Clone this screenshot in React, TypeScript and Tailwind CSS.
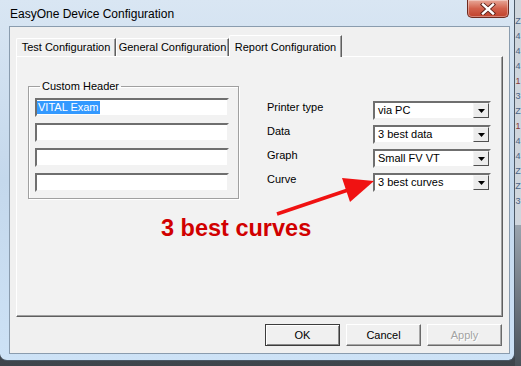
import React from "react";

const fields = ["VITAL Exam", "", "", ""];

const options = [
  { label: "Printer type", value: "via PC" },
  { label: "Data", value: "3 best data" },
  { label: "Graph", value: "Small FV VT" },
  { label: "Curve", value: "3 best curves" },
];

function CloseButton() {
  return (
    <div className="mr-[1px] flex h-[18px] w-[42px] items-center justify-center rounded-b-[5px] border border-t-0 border-[#6e2a1f] bg-gradient-to-b from-[#e7a899] via-[#d2614c] to-[#c0412b] shadow-[inset_0_0_0_1px_rgba(255,255,255,0.35)]">
      <svg width="16" height="12" viewBox="0 0 16 12">
        <path d="M3 1.5 L13 10.5 M13 1.5 L3 10.5" stroke="#5a2018" strokeWidth="4.2" strokeLinecap="square" />
        <path d="M3 1.5 L13 10.5 M13 1.5 L3 10.5" stroke="#ffffff" strokeWidth="2.4" strokeLinecap="square" />
      </svg>
    </div>
  );
}

function Combo({ value }: { value: string }) {
  return (
    <div className="flex h-[19px] w-[118px] items-stretch border-2 border-t-[#6f6f6f] border-l-[#6f6f6f] border-r-[#f2f2f2] border-b-[#f2f2f2] bg-white">
      <span className="flex-1 pl-[3px] text-[11px] leading-[14px] text-black">{value}</span>
      <div className="flex w-[16px] items-center justify-center border border-t-[#f4f4f4] border-l-[#f4f4f4] border-r-[#505050] border-b-[#505050] bg-[#ececec]">
        <svg width="7" height="4" viewBox="0 0 7 4" className="mt-[1px]">
          <path d="M0 0 H7 L3.5 4 Z" fill="#000" />
        </svg>
      </div>
    </div>
  );
}

function Button({ label, primary, disabled }: { label: string; primary?: boolean; disabled?: boolean }) {
  return (
    <div
      className={
        "flex h-[22px] w-[75px] items-center justify-center bg-[#f0f0f0] text-[11px] " +
        (primary
          ? "border border-[#3c3c3c] shadow-[inset_1px_1px_0_#fff,inset_-1px_-1px_0_#8a8a8a]"
          : "border border-t-[#ffffff] border-l-[#ffffff] border-r-[#6a6a6a] border-b-[#6a6a6a] shadow-[inset_-1px_-1px_0_#a8a8a8]")
      }
    >
      <span className={disabled ? "text-[#a3a3a3] [text-shadow:1px_1px_0_#fff]" : "text-black"}>{label}</span>
    </div>
  );
}

export default function App() {
  return (
    <div className="flex h-[366px] w-[521px] overflow-hidden bg-gradient-to-b from-[#6f7a86] to-[#3e444b] font-['Liberation_Sans',Arial,sans-serif]">
      {/* dialog window */}
      <div className="flex h-[361px] w-[515px] shrink-0 flex-col rounded-b-[7px] border-r border-b border-[#4b5866] bg-gradient-to-b from-[#d9e6f3] via-[#c4d8ec] to-[#cde2f6] pr-[4px] pb-[6px] pl-[9px]">
        {/* title bar */}
        <div className="flex h-[26px] shrink-0 items-start justify-between">
          <span className="pt-[7px] pl-[1px] text-[12px] leading-[14px] text-black">EasyOne Device Configuration</span>
          <CloseButton />
        </div>

        {/* client area */}
        <div className="flex flex-1 flex-col border border-[#8a9cae] bg-[#f0f0f0] px-[6px] pt-[8px]">
          {/* tabs */}
          <div className="flex h-[21px] items-end text-[11px] text-black">
            <div className="flex h-[18px] w-[100px] items-center justify-center rounded-tl-[2px] border-t border-l border-white border-r border-r-[#5f5f5f] shadow-[inset_-1px_0_0_#a0a0a0]">
              Test Configuration
            </div>
            <div className="flex h-[18px] w-[113px] items-center justify-center rounded-tl-[2px] border-t border-l border-white border-r border-r-[#5f5f5f] shadow-[inset_-1px_0_0_#a0a0a0]">
              General Configuration
            </div>
            <div className="relative z-10 -mb-[1px] flex h-[22px] w-[113px] items-start justify-center rounded-tl-[2px] border-t border-l border-white border-r border-r-[#5f5f5f] bg-[#f2f2f2] pt-[3px] shadow-[inset_-1px_0_0_#a0a0a0]">
              Report Configuration
            </div>
          </div>

          {/* tab page */}
          <div className="relative flex h-[261px] items-start border border-t-white border-l-white border-r-[#5f5f5f] border-b-[#5f5f5f] bg-[#f2f2f2] shadow-[inset_-1px_-1px_0_#a0a0a0]">
            <fieldset className="mt-[23px] ml-[11px] w-[211px] border border-[#a0a0a0] pt-0 pr-[9px] pb-[6px] pl-[6px] shadow-[inset_1px_1px_0_#fff,1px_1px_0_#fff]">
              <legend className="ml-[5px] px-[2px] text-[11px] leading-[13px] text-black">Custom Header</legend>
              <div className="mt-[5px] flex flex-col gap-[6px]">
                {fields.map((f, i) => (
                  <div
                    key={i}
                    className="flex h-[19px] items-center border-2 border-t-[#6f6f6f] border-l-[#6f6f6f] border-r-[#f2f2f2] border-b-[#f2f2f2] bg-white"
                  >
                    {f && (
                      <span className="bg-[#3399ff] px-[1px] text-[11px] leading-[13px] text-white">{f}</span>
                    )}
                  </div>
                ))}
              </div>
            </fieldset>

            <div className="mt-[44px] ml-[28px] flex flex-col gap-[5px]">
              {options.map((o) => (
                <div key={o.label} className="flex h-[19px] items-start">
                  <span className="w-[106px] text-[11px] leading-[13px] text-black">{o.label}</span>
                  <Combo value={o.value} />
                </div>
              ))}
            </div>

            {/* red annotation drawn over the page */}
            <svg className="pointer-events-none absolute top-0 left-0" width="488" height="260" viewBox="0 0 488 260">
              <line x1="260" y1="157" x2="331" y2="133" stroke="#f01212" strokeWidth="3.5" />
              <path d="M357 124 L333 145 L325 121 Z" fill="#f01212" />
            </svg>
            <span className="absolute top-[158px] left-[144px] text-[23.5px] leading-[26px] font-bold text-[#d10000]">
              3 best curves
            </span>
          </div>

          {/* dialog buttons */}
          <div className="mt-[7px] flex justify-end gap-[6px] pr-[1px]">
            <Button label="OK" primary />
            <Button label="Cancel" />
            <Button label="Apply" disabled />
          </div>
        </div>
      </div>

      {/* desktop behind the dialog */}
      <div className="flex flex-1 flex-col">
        <div className="flex h-[225px] flex-col items-center bg-[#cfd6dd] pt-[14px] text-[9px] leading-[15px]">
          {["Z", "4", "4", "4", "1", "3", "Z", "1", "4", "4", "Z", "Z", "3"].map((c, i) => (
            <span key={i} className={i === 4 || i === 7 ? "text-[#8a3a3a]" : "text-[#4a6488]"}>
              {c}
            </span>
          ))}
        </div>
        <div className="flex-1 bg-gradient-to-b from-[#9aa4ae] to-[#4a525a]" />
      </div>
    </div>
  );
}
